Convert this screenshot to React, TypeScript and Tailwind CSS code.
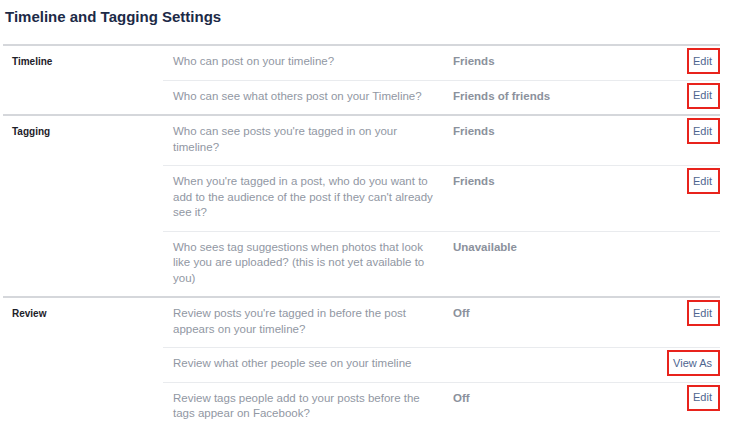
import React from "react";

type Row = {
  question: string;
  value?: string;
  action?: string;
};

type Section = {
  label: string;
  rows: Row[];
};

const sections: Section[] = [
  {
    label: "Timeline",
    rows: [
      { question: "Who can post on your timeline?", value: "Friends", action: "Edit" },
      {
        question: "Who can see what others post on your Timeline?",
        value: "Friends of friends",
        action: "Edit",
      },
    ],
  },
  {
    label: "Tagging",
    rows: [
      {
        question: "Who can see posts you're tagged in on your timeline?",
        value: "Friends",
        action: "Edit",
      },
      {
        question:
          "When you're tagged in a post, who do you want to add to the audience of the post if they can't already see it?",
        value: "Friends",
        action: "Edit",
      },
      {
        question:
          "Who sees tag suggestions when photos that look like you are uploaded? (this is not yet available to you)",
        value: "Unavailable",
      },
    ],
  },
  {
    label: "Review",
    rows: [
      {
        question: "Review posts you're tagged in before the post appears on your timeline?",
        value: "Off",
        action: "Edit",
      },
      { question: "Review what other people see on your timeline", action: "View As" },
      {
        question: "Review tags people add to your posts before the tags appear on Facebook?",
        value: "Off",
        action: "Edit",
      },
    ],
  },
];

function SettingRow({ row, first }: { row: Row; first: boolean }) {
  return (
    <div
      className={`flex items-start pt-[8px] pb-[10px] ${
        first ? "" : "border-t border-[#e9ebee]"
      }`}
    >
      <div className="w-[290px] shrink-0 pl-[10px] pr-[20px] text-[11.5px] leading-[15.5px] text-[#9197a3]">
        {row.question}
      </div>
      <div className="flex-1 text-[11.5px] font-bold leading-[15.5px] text-[#8b919c]">
        {row.value}
      </div>
      {row.action && (
        <a
          href="#"
          className="-my-[6px] flex h-[26px] items-center border-2 border-[#e8231c] pl-[4px] pr-[6px] text-[11px] text-[#4e6590]"
        >
          {row.action}
        </a>
      )}
    </div>
  );
}

export default function App() {
  return (
    <main
      className="h-[421px] w-[735px] overflow-hidden bg-white pl-[3px]"
      style={{ fontFamily: '"Liberation Sans", Arial, sans-serif' }}
    >
      <div className="w-[717px]">
        <h1 className="pl-[2px] pt-[8px] pb-[18px] text-[15px] font-bold leading-[18px] text-[#1c2a47]">
          Timeline and Tagging Settings
        </h1>
        {sections.map((section) => (
          <section key={section.label} className="flex border-t-2 border-[#d5d7db]">
            <div className="w-[160px] shrink-0 pl-[9px] pt-[8px] text-[10px] font-bold leading-[15.5px] text-[#1d2129]">
              {section.label}
            </div>
            <div className="flex-1">
              {section.rows.map((row, i) => (
                <SettingRow key={row.question} row={row} first={i === 0} />
              ))}
            </div>
          </section>
        ))}
      </div>
    </main>
  );
}
